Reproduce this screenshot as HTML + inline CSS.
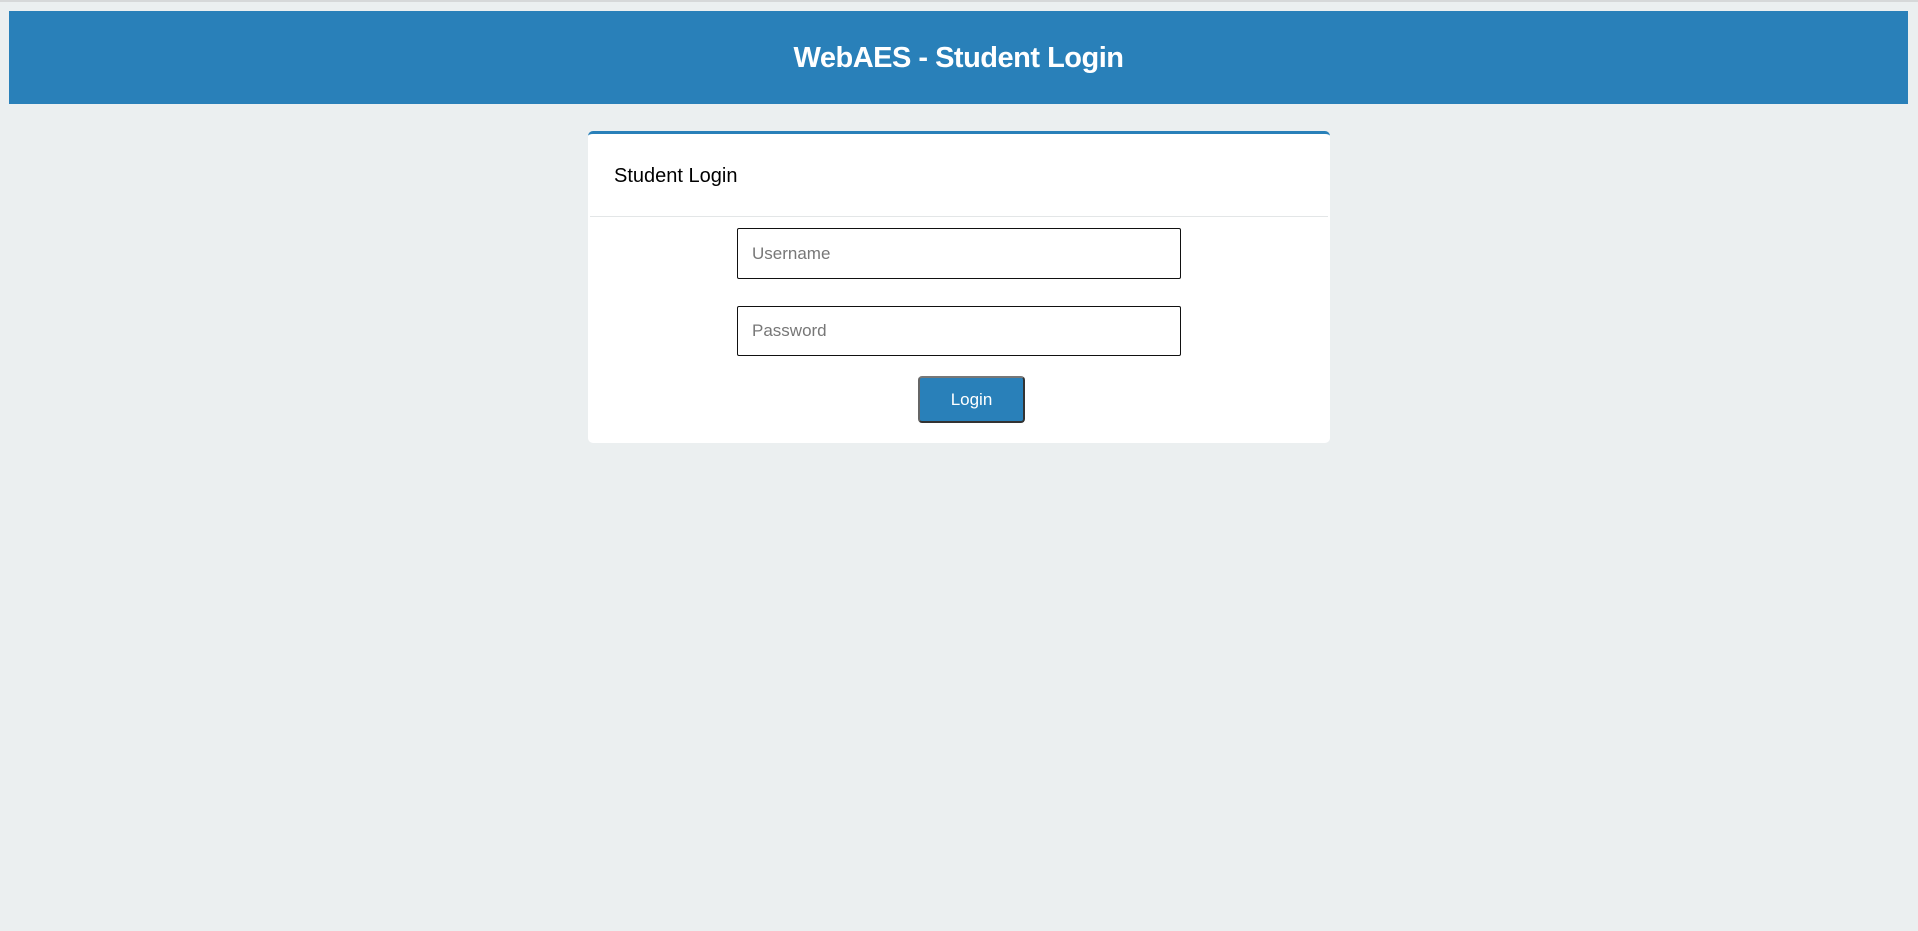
<!DOCTYPE html>
<html><head><style>
html,body{margin:0;padding:0}
body{width:1918px;height:931px;background:#ebeff0;font-family:"Liberation Sans",sans-serif;position:relative;overflow:hidden}
.topline{position:absolute;left:0;top:0;width:1918px;height:2px;background:#d6d8d9}
.hdr{position:absolute;left:9px;top:11px;width:1899px;height:93px;background:#2980b9;color:#fff;font-weight:bold;font-size:29px;text-align:center;line-height:95px;letter-spacing:-0.5px}
.card{position:absolute;left:588px;top:131px;width:742px;height:312px;background:#fff;border-top:3px solid #2980b9;border-radius:5px;box-sizing:border-box}
.ct{position:absolute;left:26px;top:31px;font-size:20px;color:#000}
.div{position:absolute;left:2px;right:2px;top:82px;height:1px;background:#e3e6e7}
.in{position:absolute;left:149px;width:444px;box-sizing:border-box;border:1px solid #111;border-radius:2px;font-size:17px;color:#777;padding-left:14px}
.btn{position:absolute;left:330px;top:242px;width:107px;height:47px;box-sizing:border-box;background:#2980b9;border:2px solid #333;border-top-color:#777;border-left-color:#666;border-radius:4px;color:#fff;font-size:17px;text-align:center;line-height:43px}
</style></head><body>
<div class="topline"></div>
<div class="hdr">WebAES - Student Login</div>
<div class="card">
<div class="ct">Student Login</div>
<div class="div"></div>
<div class="in" style="top:94px;height:51px;line-height:49px">Username</div>
<div class="in" style="top:172px;height:50px;line-height:48px">Password</div>
<div class="btn">Login</div>
</div>
</body></html>
